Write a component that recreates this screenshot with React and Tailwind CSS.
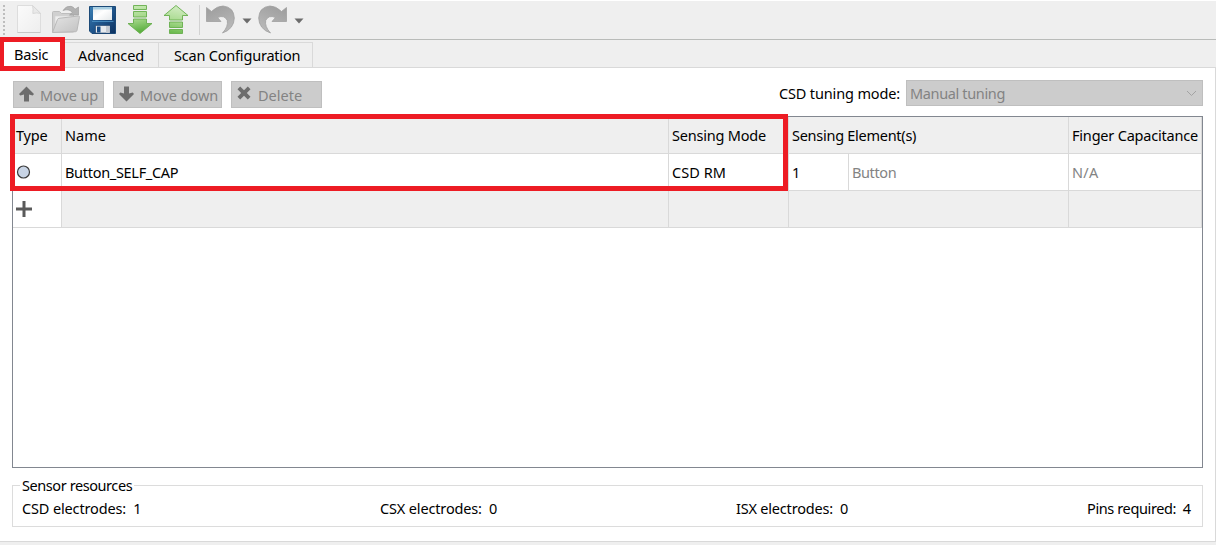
const PageIcon = () => (
  <svg width="26" height="30" viewBox="0 0 26 30" className="block">
    <defs>
      <linearGradient id="page" x1="0" y1="0" x2="1" y2="1">
        <stop offset="0" stopColor="#fbfbfb" />
        <stop offset="1" stopColor="#eeeeee" />
      </linearGradient>
    </defs>
    <path d="M1.500 1.500H16.500L24.500 9V28.500H1.500Z" fill="url(#page)" stroke="#dddddd" />
    <path d="M16.500 1.500Q17.500 5 16.800 9.500Q21 8.300 24.500 9.500Z" fill="#e9e9e9" stroke="#d3d3d3" strokeWidth="0.800" />
    <path d="M1.500 28.500H24.500" stroke="#c6c6c6" />
  </svg>
);

const FolderIcon = () => (
  <svg width="30" height="30" viewBox="0 0 30 30" className="block">
    <defs>
      <linearGradient id="folder" x1="0" y1="0" x2="1" y2="1">
        <stop offset="0" stopColor="#e4e4e4" />
        <stop offset="1" stopColor="#c2c2c2" />
      </linearGradient>
    </defs>
    <path d="M1.500 28V8.500Q1.500 7.500 2.500 7.500H8.500L10.500 9.500H22.500V28Z" fill="#d0d0d0" stroke="#bdbdbd" />
    <path d="M4 12H20V24H4Z" fill="#eeeeee" stroke="#d4d4d4" strokeWidth="0.700" />
    <path d="M1.500 28.500L6.500 15.500Q7 14.500 8 14.300L27.500 12Q28.700 12 28.400 13.300L26 26.400Q25.700 27.600 24.500 27.700Z" fill="url(#folder)" stroke="#b9b9b9" />
    <path d="M12 6.500Q15 1.500 20 2.300Q22.600 2.800 24 5.300L27.500 3V11H18.500L21.400 8.500Q18 4.300 12 6.500Z" fill="#b2b2b2" stroke="#9f9f9f" strokeWidth="0.700" />
  </svg>
);

const SaveIcon = () => (
  <svg width="28" height="28" viewBox="0 0 28 28" className="block">
    <defs>
      <linearGradient id="disk" x1="0" y1="0" x2="1" y2="1">
        <stop offset="0" stopColor="#3b7fb4" />
        <stop offset="0.500" stopColor="#1f558c" />
        <stop offset="1" stopColor="#0c315f" />
      </linearGradient>
      <linearGradient id="label" x1="0" y1="0" x2="1" y2="1">
        <stop offset="0" stopColor="#dfe5e8" />
        <stop offset="0.450" stopColor="#ffffff" />
        <stop offset="1" stopColor="#e4e8ea" />
      </linearGradient>
    </defs>
    <path d="M0.500 0.500H26.500V27.500H3L0.500 25Z" fill="url(#disk)" stroke="#1c4a78" />
    <path d="M4 1H23V14H4Z" fill="url(#label)" />
    <path d="M4 1H23V3.500H4Z" fill="#a9cfe2" />
    <path d="M3 15.500H24.500" stroke="#4f96c8" strokeWidth="0.800" />
    <path d="M6.500 19.500H21V27H6.500Z" fill="#e6eaee" stroke="#173b64" strokeWidth="0.600" />
    <path d="M8 20.500H11.500V26.500H8Z" fill="#174d87" />
    <path d="M17 20H20.700V27H17Z" fill="#c3c9d1" />
  </svg>
);

const GreenArrow = ({ up }) => (
  <svg width="26" height="30" viewBox="0 0 26 30" className={up ? "block rotate-180" : "block"}>
    <defs>
      <linearGradient id="green" gradientUnits="userSpaceOnUse" x1="8" y1="0" x2="14" y2="30">
        <stop offset="0" stopColor="#c9ebb6" />
        <stop offset="0.500" stopColor="#a3d688" />
        <stop offset="1" stopColor="#4ea832" />
      </linearGradient>
      <linearGradient id="greenUp" gradientUnits="userSpaceOnUse" x1="10" y1="30" x2="16" y2="0">
        <stop offset="0" stopColor="#d6eec8" />
        <stop offset="0.500" stopColor="#addc94" />
        <stop offset="1" stopColor="#62b544" />
      </linearGradient>
    </defs>
    <g fill={up ? "url(#greenUp)" : "url(#green)"} stroke="#67ae4c" strokeWidth="0.900">
      <path d="M6.500 1.500H19.500V5.500H6.500Z" />
      <path d="M6.500 7.500H19.500V13H6.500Z" />
      <path d="M6.500 15H19.500V19.500H25L13 29.500L1 19.500H6.500Z" />
    </g>
  </svg>
);

const CurvedArrow = ({ redo }) => (
  <svg width="30" height="30" viewBox="0 0 30 30" className={redo ? "block -scale-x-100" : "block"}>
    <defs>
      <linearGradient id="curve" x1="0" y1="0" x2="0.500" y2="1">
        <stop offset="0" stopColor="#9b9b9b" />
        <stop offset="1" stopColor="#b8b8b8" />
      </linearGradient>
    </defs>
    <path d="M1.500 2.500L6.500 6.500Q12 1 18 1Q28.800 2 29.300 13Q29 24 17.500 28Q23.500 21.500 22.300 15.500Q19.500 9.500 12.500 12.500L16 16.500H1.500Z" fill="url(#curve)" stroke="#a0a0a0" strokeWidth="0.800" />
  </svg>
);

const Caret = () => (
  <svg width="10" height="6" viewBox="0 0 10 6" className="block">
    <path d="M0.500 0.500H9.500L5 5.500Z" fill="#6c6c6c" />
  </svg>
);

const SmallArrow = ({ down }) => (
  <svg width="15" height="16" viewBox="0 0 15 16" className={down ? "block rotate-180" : "block"}>
    <path d="M7.500 0.500L15 8L13.700 9.500L10 8.500V15.500H5V8.500L1.300 9.500L0 8Z" fill="#6d6d6d" />
  </svg>
);

const Cross = () => (
  <svg width="14" height="14" viewBox="0 0 14 14" className="block">
    <path d="M3.200 0.500L7 4.200L10.800 0.500L13.500 3.200L9.800 7L13.500 10.800L10.800 13.500L7 9.800L3.200 13.500L0.500 10.800L4.200 7L0.500 3.200Z" fill="#6d6d6d" />
  </svg>
);

const ActionButton = ({ className, icon, children }) => (
  <button className={"flex h-[27px] items-start border border-[#bfbfbf] bg-[#cccccc] text-[#838383] " + className}>
    <span className="pt-[4px]">{icon}</span>
    {children}
  </button>
);

const Label = ({ className = "", children }) => (
  <span className={"whitespace-pre " + className}>{children}</span>
);

export default function App() {
  return (
    <div className="flex h-[545px] w-[1216px] flex-col overflow-hidden bg-[#efefef] font-['Noto_Sans','Open_Sans',sans-serif] text-[14.5px] leading-5 tracking-[-0.2px] text-black">
      <div className="flex h-10 shrink-0 items-start border-t border-b border-t-white border-b-[#b9bbb9] pt-[3px]">
        <div className="ml-[3px] flex w-[3px] flex-col gap-[2px] pt-px">
          {[0, 1, 2, 3, 4, 5, 6, 7].map((i) => (
            <span key={i} className="h-[2px] w-[2px] bg-[#bdbdbd]" />
          ))}
        </div>
        <div className="ml-[10px]"><PageIcon /></div>
        <div className="ml-[9px]"><FolderIcon /></div>
        <div className="ml-[8px] pt-[2px]"><SaveIcon /></div>
        <div className="ml-[10px]"><GreenArrow /></div>
        <div className="ml-[10px] pt-px"><GreenArrow up /></div>
        <div className="ml-[10px] mt-px h-[30px] w-px bg-[#d2d2d2]" />
        <div className="ml-[5px] pt-px"><CurvedArrow /></div>
        <div className="ml-[7px] pt-[14px]"><Caret /></div>
        <div className="ml-[6px] pt-px"><CurvedArrow redo /></div>
        <div className="ml-[6px] pt-[14px]"><Caret /></div>
      </div>

      <div className="relative z-10 -mb-px flex h-7 shrink-0 items-end">
        <div className="relative flex h-7 w-[64px] items-center bg-white pl-[14px] pb-px">
          <Label>Basic</Label>
          <div className="pointer-events-none absolute -top-[3px] left-0 h-[34px] w-[65px] border-[5px] border-l-4 border-[#ed1c24]" />
        </div>
        <div className="flex h-[26px] w-[95px] items-center border border-l-0 border-[#d9d9d9] pl-[14px]">
          <Label className="tracking-[-0.06px]">Advanced</Label>
        </div>
        <div className="flex h-[26px] w-[154px] items-center border border-l-0 border-[#d9d9d9] pl-[15px]">
          <Label>Scan Configuration</Label>
        </div>
      </div>

      <div className="flex h-[475px] shrink-0 flex-col border-t border-r border-b border-[#d9d9d9] bg-white pl-3 pr-3">
        <div className="flex h-[48px] shrink-0 items-start pt-3">
          <ActionButton className="ml-px mt-px w-[91px] pl-[5px]" icon={<SmallArrow />}>
            <Label className="ml-[6px] pt-[3px] tracking-[-0.1px]">Move up</Label>
          </ActionButton>
          <ActionButton className="ml-[9px] mt-px w-[109px] pl-[5px]" icon={<SmallArrow down />}>
            <Label className="ml-[6px] pt-[3px] tracking-[-0.05px]">Move down</Label>
          </ActionButton>
          <ActionButton className="ml-[9px] mt-px w-[91px] pl-[5px]" icon={<Cross />}>
            <Label className="ml-[7px] pt-[3px] tracking-normal">Delete</Label>
          </ActionButton>
          <Label className="ml-auto mr-[6px] mt-[3px] tracking-[-0.14px]">CSD tuning mode:</Label>
          <div className="flex h-[26px] w-[297px] items-center justify-between border border-[#bfbfbf] bg-[#cccccc] pl-[3px] pr-[5px] text-[#838383]">
            <Label className="tracking-[-0.36px]">Manual tuning</Label>
            <svg width="11" height="7" viewBox="0 0 11 7">
              <path d="M1 1L5.500 5.500L10 1" fill="none" stroke="#a3a3a3" />
            </svg>
          </div>
        </div>

        <div className="relative h-[352px] w-[1191px] shrink-0 border border-[#828790]">
          <div className="grid w-[1189px] grid-cols-[49px_607px_120px_280px_133px] grid-rows-[37px_37px_37px] *:flex *:items-center *:border-r *:border-b *:border-[#d9d9d9] *:pl-[3px]">
            <div className="bg-[#efefef]"><Label>Type</Label></div>
            <div className="bg-[#efefef]"><Label className="tracking-normal">Name</Label></div>
            <div className="bg-[#efefef]"><Label>Sensing Mode</Label></div>
            <div className="bg-[#efefef]"><Label className="tracking-[-0.27px]">Sensing Element(s)</Label></div>
            <div className="bg-[#efefef]"><Label className="tracking-[-0.2px]">Finger Capacitance</Label></div>

            <div>
              <svg width="15" height="15" viewBox="0 0 15 15">
                <circle cx="7.500" cy="7" r="6" fill="#c8d4e5" stroke="#3a3a3a" strokeWidth="1.200" />
              </svg>
            </div>
            <div><Label className="tracking-[-0.3px]">Button_SELF_CAP</Label></div>
            <div><Label className="tracking-[0.05px]">CSD RM</Label></div>
            <div>
              <div className="flex h-full w-[57px] items-center border-r border-[#d9d9d9]"><Label>1</Label></div>
              <Label className="ml-[3px] tracking-[-0.4px] text-[#838383]">Button</Label>
            </div>
            <div><Label className="tracking-[0.3px] text-[#838383]">N/A</Label></div>

            <div>
              <svg width="16" height="16" viewBox="0 0 16 16">
                <path d="M8 0V16M0 8H16" stroke="#5a5a5a" strokeWidth="3" />
              </svg>
            </div>
            <div className="bg-[#efefef]" />
            <div className="bg-[#efefef]" />
            <div className="bg-[#efefef]" />
            <div className="bg-[#efefef]" />
          </div>
          <div className="pointer-events-none absolute -left-[3px] -top-[3px] h-[77px] w-[778px] border-[5px] border-[#ed1c24]" />
        </div>

        <fieldset className="mt-[7px] h-[52px] w-[1191px] border border-[#dcdcdc] pl-[9px]">
          <legend className="-ml-[2px] px-[2px]"><Label className="tracking-[-0.42px]">Sensor resources</Label></legend>
          <div className="flex pt-[3px]">
            <Label className="w-[358px] tracking-[-0.14px]">CSD electrodes:  1</Label>
            <Label className="w-[356px] tracking-[-0.15px]">CSX electrodes:  0</Label>
            <Label className="w-[351px]">ISX electrodes:  0</Label>
            <Label className="tracking-[-0.38px]">Pins required:  4</Label>
          </div>
        </fieldset>
      </div>
    </div>
  );
}
